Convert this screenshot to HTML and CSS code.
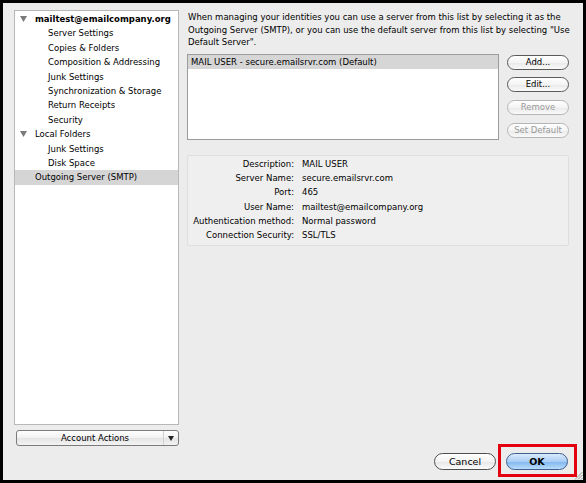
FILE: index.html
```html
<!DOCTYPE html>
<html>
<head>
<meta charset="utf-8">
<link rel="stylesheet" href="styles.css">
</head>
<body>
<div class="window">
  <div class="main">
    <div class="left">
      <div class="tree">
        <div class="row account"><svg class="tri" width="7" height="6" viewBox="0 0 7 6"><path d="M0 0H7L3.5 6Z" fill="#7a7a7a"/></svg>mailtest@emailcompany.org</div>
        <div class="row sub">Server Settings</div>
        <div class="row sub">Copies &amp; Folders</div>
        <div class="row sub">Composition &amp; Addressing</div>
        <div class="row sub">Junk Settings</div>
        <div class="row sub">Synchronization &amp; Storage</div>
        <div class="row sub">Return Receipts</div>
        <div class="row sub">Security</div>
        <div class="row top"><svg class="tri" width="7" height="6" viewBox="0 0 7 6"><path d="M0 0H7L3.5 6Z" fill="#7a7a7a"/></svg>Local Folders</div>
        <div class="row sub">Junk Settings</div>
        <div class="row sub">Disk Space</div>
        <div class="row top selected">Outgoing Server (SMTP)</div>
      </div>
      <div class="actions">
        <span class="actions-label">Account Actions</span>
        <span class="actions-arrow"><svg width="6" height="5" viewBox="0 0 6 5"><path d="M0 0H6L3 5Z" fill="#222"/></svg></span>
      </div>
    </div>
    <div class="right">
      <p class="desc">When managing your identities you can use a server from this list by selecting it as the Outgoing Server (SMTP), or you can use the default server from this list by selecting "Use Default Server".</p>
      <div class="list-area">
        <div class="list">
          <div class="list-row selected">MAIL USER - secure.emailsrvr.com (Default)</div>
        </div>
        <div class="side-buttons">
          <div class="pill">Add...</div>
          <div class="pill">Edit...</div>
          <div class="pill disabled">Remove</div>
          <div class="pill disabled">Set Default</div>
        </div>
      </div>
      <div class="details">
        <span class="label">Description:</span><span class="value">MAIL USER</span>
        <span class="label">Server Name:</span><span class="value">secure.emailsrvr.com</span>
        <span class="label">Port:</span><span class="value">465</span>
        <span class="label">User Name:</span><span class="value">mailtest@emailcompany.org</span>
        <span class="label">Authentication method:</span><span class="value">Normal password</span>
        <span class="label">Connection Security:</span><span class="value">SSL/TLS</span>
      </div>
    </div>
  </div>
  <div class="bottom">
    <div class="btn cancel">Cancel</div>
    <div class="btn ok">OK</div>
  </div>
  <div class="highlight"></div>
  <svg class="grip" width="9" height="9" viewBox="0 0 9 9"><path d="M8.5 1L1 8.5M8.5 4L4 8.5M8.5 7L7 8.5" stroke="#999" stroke-width="1"/></svg>
</div>
</body>
</html>
```
FILE: styles.css
```css
html, body {
  margin: 0;
  padding: 0;
  background: #000;
}
body {
  width: 586px;
  height: 483px;
  overflow: hidden;
  font-family: "DejaVu Sans", sans-serif;
  font-size: 8.5px;
  color: #000;
}
.window {
  position: relative;
  margin: 3px;
  width: 580px;
  height: 477px;
  box-sizing: border-box;
  background: #ececec;
  padding: 7px 14px 0 11px;
  display: flex;
  flex-direction: column;
}
.main {
  display: flex;
  gap: 8px;
}
.left {
  width: 165px;
  display: flex;
  flex-direction: column;
  gap: 5px;
}
.tree {
  height: 415px;
  box-sizing: border-box;
  background: #fff;
  border: 1px solid #b8b8b8;
  padding-top: 1px;
}
.row {
  height: 14.4px;
  line-height: 14.4px;
  white-space: nowrap;
  position: relative;
}
.row.account, .row.top { padding-left: 20px; }
.row.account { font-weight: bold; }
.row.sub { padding-left: 33px; }
.row.selected { background: #d5d5d5; }
.tri {
  position: absolute;
  left: 5px;
  top: 4px;
}
.actions {
  margin-left: 2px;
  height: 16px;
  box-sizing: border-box;
  border: 1px solid #7b7b7b;
  border-radius: 3px;
  background: linear-gradient(#ffffff, #f1f1f1 50%, #e4e4e4 51%, #f3f3f3);
  display: flex;
  align-items: center;
}
.actions-label {
  flex: 1;
  text-align: center;
  padding-left: 10px;
}
.actions-arrow {
  width: 14px;
  height: 100%;
  border-left: 1px solid #d0d0d0;
  display: flex;
  align-items: center;
  justify-content: center;
}
.right {
  width: 382px;
  display: flex;
  flex-direction: column;
}
.desc {
  margin: 1px -8px 0 1px;
  line-height: 12.5px;
}
.list-area {
  display: flex;
  gap: 8px;
  margin-top: 5px;
}
.list {
  width: 312px;
  height: 86px;
  box-sizing: border-box;
  background: #fff;
  border: 1px solid #9c9c9c;
}
.list-row {
  height: 14px;
  line-height: 14px;
  padding-left: 3px;
}
.list-row.selected { background: #d6d6d6; }
.side-buttons {
  display: flex;
  flex-direction: column;
  gap: 7.7px;
  padding-top: 1px;
}
.pill {
  width: 62px;
  height: 15px;
  box-sizing: border-box;
  border: 1px solid #5a5a5a;
  border-radius: 8px;
  background: linear-gradient(#ffffff, #f4f4f4 50%, #e9e9e9 51%, #fafafa);
  text-align: center;
  line-height: 13px;
}
.pill.disabled {
  border-color: #b5b5b5;
  color: #9a9a9a;
}
.details {
  margin-top: 15px;
  height: 91px;
  box-sizing: border-box;
  border: 1px solid #dedede;
  border-radius: 2px;
  background: #efefef;
  padding-top: 1px;
  display: grid;
  grid-template-columns: 106px auto;
  grid-auto-rows: 14.4px;
  column-gap: 8px;
  align-content: start;
}
.label {
  text-align: right;
  line-height: 14.4px;
  white-space: nowrap;
}
.value {
  line-height: 14.4px;
}
.bottom {
  display: flex;
  justify-content: flex-end;
  gap: 10px;
  margin-top: 7px;
  padding-right: 1px;
}
.btn {
  width: 62px;
  height: 17px;
  box-sizing: border-box;
  border-radius: 9px;
  text-align: center;
  line-height: 15px;
  font-size: 9.5px;
}
.cancel {
  border: 1px solid #4f4f4f;
  background: linear-gradient(#ffffff, #f3f3f3 50%, #e6e6e6 51%, #fbfbfb);
}
.ok {
  border: 1px solid #3d5f8e;
  background: linear-gradient(#d9eafc, #a9cdf5 50%, #7fb5ef 51%, #b9dcfb);
  font-weight: bold;
}
.highlight {
  position: absolute;
  left: 495px;
  top: 441px;
  width: 79px;
  height: 33px;
  box-sizing: border-box;
  border: 3px solid #e4000f;
}
.grip {
  position: absolute;
  right: 0;
  bottom: 0;
}
```
